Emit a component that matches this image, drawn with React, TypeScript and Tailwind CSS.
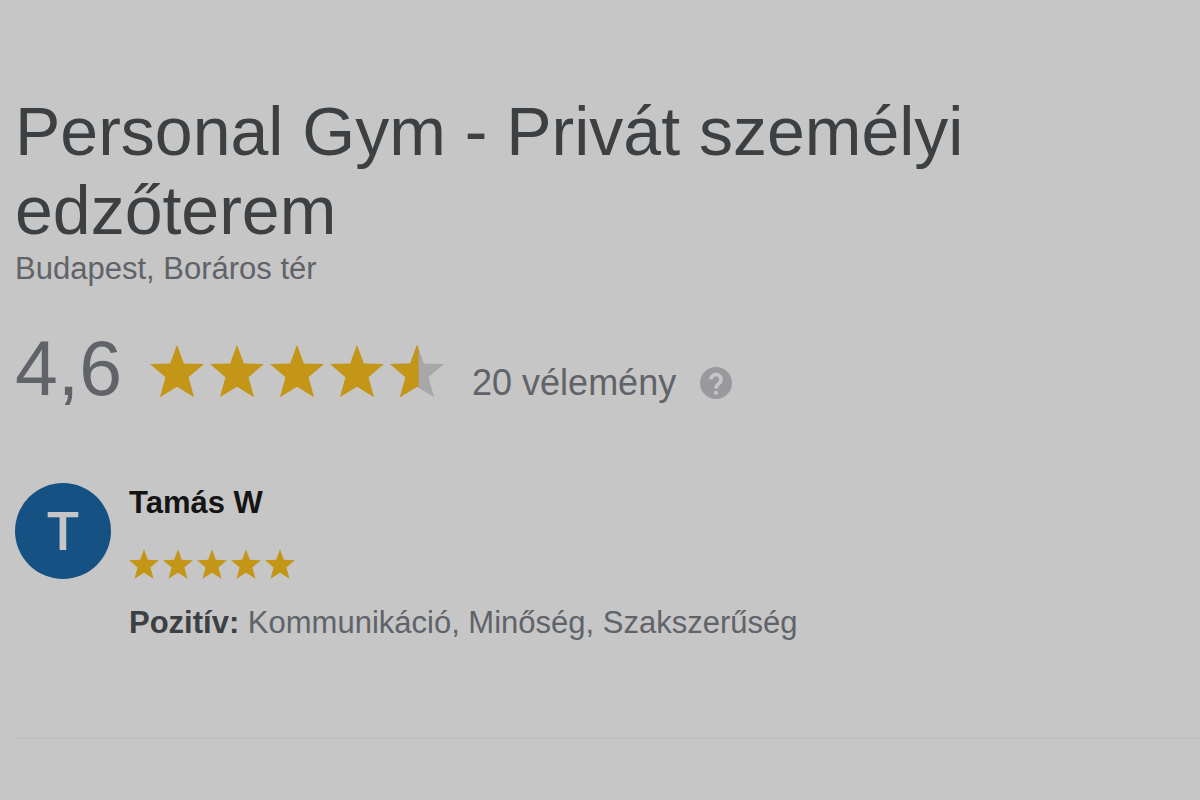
const STAR = "M82 0 L103 57 L164 59 L117 99 L134 160 L82 128 L30 160 L47 99 L0 59 L61 57 Z";
const LEFT_HALF = "M82 0 L87 14 V131 L82 128 L30 160 L47 99 L0 59 L61 57 Z";

function Star({ className, half = false }: { className: string; half?: boolean }) {
  return (
    <svg viewBox="0 0 164 160" className={className} aria-hidden="true">
      <path d={STAR} fill={half ? "#a8a8a8" : "#c39617"} />
      {half && <path d={LEFT_HALF} fill="#c39617" />}
    </svg>
  );
}

export default function App() {
  return (
    <main className="min-h-screen bg-[#c6c6c6] pt-[92px] pl-[15px] font-['Liberation_Sans',Arial,sans-serif] text-[#606368]">
      <header>
        <h1 className="max-w-[1000px] text-[68px] leading-[79px] text-[#3c4043]">
          Personal Gym - Privát személyi edzőterem
        </h1>
        <p className="text-[31px] leading-[38px]">Budapest, Boráros tér</p>
      </header>

      <section className="mt-[40px] flex h-[80px] items-center">
        <span className="text-[77px] leading-[80px]">4,6</span>
        <div role="img" aria-label="4,6" className="mt-[6px] ml-[28px] flex gap-[6px]">
          <Star className="size-[54px]" />
          <Star className="size-[54px]" />
          <Star className="size-[54px]" />
          <Star className="size-[54px]" />
          <Star className="size-[54px]" half />
        </div>
        <a href="#reviews" className="mt-[30px] ml-[28px] text-[36px] leading-[44px]">20 vélemény</a>
        <button type="button" aria-label="?" className="mt-[30px] ml-[24px]">
          <svg viewBox="0 0 32 32" className="size-8">
            <circle cx="16" cy="16" r="16" fill="#97999c" />
            <path d="M11 12.500a5 5 0 1 1 7.800 4.100C16.900 18 16 18.800 16 21.500" fill="none" stroke="#c6c6c6" strokeWidth="3.600" />
            <circle cx="16" cy="25.800" r="2" fill="#c6c6c6" />
          </svg>
        </button>
      </section>

      <article id="reviews" className="mt-[75px] flex gap-[18px] border-b-2 border-[#c0c0c1] pb-[94px]">
        <div className="flex size-24 shrink-0 items-center justify-center rounded-full bg-[#165183] font-['Roboto',sans-serif] text-[54px] font-medium text-[#c6c6c6]">
          T
        </div>
        <div>
          <h2 className="text-[31px] leading-[40px] font-bold text-[#141414]">Tamás W</h2>
          <div role="img" aria-label="5" className="mt-[26px] flex gap-1">
            <Star className="size-[30px]" />
            <Star className="size-[30px]" />
            <Star className="size-[30px]" />
            <Star className="size-[30px]" />
            <Star className="size-[30px]" />
          </div>
          <p className="mt-[24px] text-[31px] leading-[40px]">
            <strong className="text-[#3c4043]">Pozitív:</strong> Kommunikáció, Minőség, Szakszerűség
          </p>
        </div>
      </article>
    </main>
  );
}
